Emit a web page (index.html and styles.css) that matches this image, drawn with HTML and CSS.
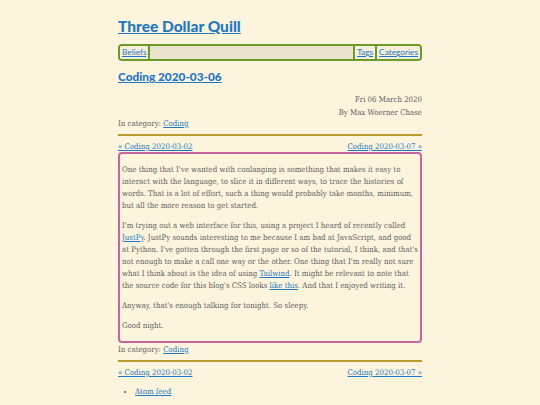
FILE: index.html
```html
<!DOCTYPE html>
<html>
<head>
<meta charset="utf-8">
<link rel="stylesheet" href="styles.css">
</head>
<body>
<div class="page">
  <header class="site-header">
    <h1 class="site-title"><a href="#">Three Dollar Quill</a></h1>
    <nav class="nav">
      <a class="nav-item" href="#">Beliefs</a>
      <span class="nav-spacer"></span>
      <a class="nav-item" href="#">Tags</a>
      <a class="nav-item" href="#">Categories</a>
    </nav>
  </header>
  <article class="article">
    <h2 class="article-title"><a href="#">Coding 2020-03-06</a></h2>
    <div class="meta">
      <div>Fri 06 March 2020</div>
      <div>By Max Woerner Chase</div>
    </div>
    <div class="category">In category: <a href="#">Coding</a></div>
    <hr class="rule">
    <div class="pager">
      <a href="#">« Coding 2020-03-02</a>
      <a href="#">Coding 2020-03-07 »</a>
    </div>
    <div class="content">
      <p>One thing that I've wanted with conlanging is something that makes it easy to interact with the language, to slice it in different ways, to trace the histories of words. That is a lot of effort, such a thing would probably take months, minimum, but all the more reason to get started.</p>
      <p>I'm trying out a web interface for this, using a project I heard of recently called <a href="#">JustPy</a>. JustPy sounds interesting to me because I am bad at JavaScript, and good at Python. I've gotten through the first page or so of the tutorial, I think, and that's not enough to make a call one way or the other. One thing that I'm really not sure what I think about is the idea of using <a href="#">Tailwind</a>. It might be relevant to note that the source code for this blog's CSS looks <a href="#">like this</a>. And that I enjoyed writing it.</p>
      <p>Anyway, that's enough talking for tonight. So sleepy.</p>
      <p>Good night.</p>
    </div>
    <div class="category after">In category: <a href="#">Coding</a></div>
    <hr class="rule">
    <div class="pager">
      <a href="#">« Coding 2020-03-02</a>
      <a href="#">Coding 2020-03-07 »</a>
    </div>
  </article>
  <ul class="feeds">
    <li><a href="#">Atom feed</a></li>
  </ul>
</div>
</body>
</html>
```
FILE: styles.css
```css
html, body {
  margin: 0;
  padding: 0;
  background: #fcf4dd;
}
body {
  font-family: "DejaVu Serif Condensed", "DejaVu Serif", serif;
  font-size: 7.8px;
  line-height: 12px;
  color: #5e5e5e;
}
a {
  color: #1f78c1;
}
.page {
  width: 304px;
  margin: 0 auto;
  padding-top: 14px;
}
.site-title {
  font-family: Lato, sans-serif;
  font-weight: 900;
  font-size: 15.5px;
  line-height: 24px;
  margin: 0 0 6px 0;
}
.site-title a {
  color: #1f78c1;
}
.nav {
  display: flex;
  border: 2px solid #6a9a2a;
  border-radius: 4px;
  background: #ebe4cf;
  height: 13px;
  font-family: Lato, sans-serif;
  font-size: 8.3px;
  line-height: 13px;
}
.nav-item {
  padding: 0 2px;
  background: #f5eedb;
}
.nav-item:first-child {
  border-right: 2px solid #6a9a2a;
  border-radius: 2px 0 0 2px;
}
.nav-item:last-child {
  border-radius: 0 2px 2px 0;
}
.nav-spacer {
  flex: 1;
  border-right: 2px solid #6a9a2a;
}
.nav-item + .nav-item {
  border-left: 2px solid #6a9a2a;
}
.article-title {
  font-family: Lato, sans-serif;
  font-weight: 900;
  font-size: 11.8px;
  line-height: 18px;
  margin: 7px 0 7px 0;
}
.meta {
  text-align: right;
  line-height: 13px;
}
.category {
  line-height: 10px;
}
.category.after {
  margin-top: 2px;
}
.rule {
  border: 0;
  height: 2px;
  background: #b89a32;
  margin: 5px 0 5px 0;
}
.pager {
  display: flex;
  justify-content: space-between;
  line-height: 11px;
}
.content {
  border: 2px solid #c8649e;
  border-radius: 4px;
  padding: 2px 2px 1px 2px;
}
.content p {
  margin: 8px 0;
}
.feeds {
  margin: 8px 0 0 0;
  padding-left: 17px;
  line-height: 12px;
}
```
